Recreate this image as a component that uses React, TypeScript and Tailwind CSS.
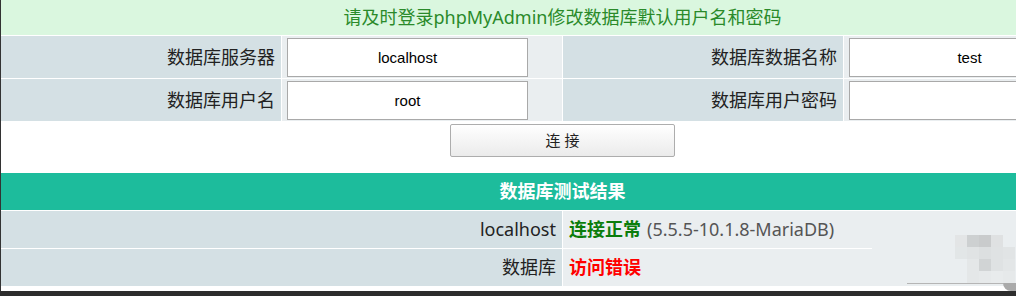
import React from "react";

const font = { fontFamily: '"Noto Sans", "Noto Sans CJK SC", sans-serif' };

function Label({ children }: { children: React.ReactNode }) {
  return (
    <div className="flex h-[42px] items-center justify-end bg-[#d4e0e4] pr-[6px] text-[18px] text-[#222]">
      {children}
    </div>
  );
}

function Field({ value }: { value: string }) {
  return (
    <div className="flex h-[42px] items-center bg-[#eaeef0] pl-[5px]">
      <input
        readOnly
        value={value}
        className="h-[39px] w-[241px] border border-[#a9a9a9] bg-white text-center text-[15px] text-black outline-none"
        style={{ fontFamily: '"Liberation Sans", Arial, sans-serif' }}
      />
    </div>
  );
}

export default function App() {
  return (
    <div className="relative h-[296px] w-[1016px] overflow-hidden bg-white" style={font}>
      <div className="flex h-[291px] w-[1016px] border-l border-[#333]">
        <div className="w-[1123px] shrink-0">
          {/* Top form */}
          <div className="grid grid-cols-[280px_280px_280px_280px] gap-px bg-white">
            <div className="col-span-4 flex h-[35px] items-center justify-center bg-[#daf7df] text-[18px] text-[#2a8a2a]">
              请及时登录phpMyAdmin修改数据库默认用户名和密码
            </div>
            <Label>数据库服务器</Label>
            <Field value="localhost" />
            <Label>数据库数据名称</Label>
            <Field value="test" />
            <Label>数据库用户名</Label>
            <Field value="root" />
            <Label>数据库用户密码</Label>
            <Field value="" />
          </div>

          {/* Connect button */}
          <div className="flex h-[52px] justify-center pt-[3px]">
            <button className="h-[33px] w-[225px] rounded-[2px] border border-[#adadad] bg-gradient-to-b from-white to-[#ebebeb] text-[15px] text-[#222]">
              连 接
            </button>
          </div>

          {/* Results */}
          <div className="grid grid-cols-[561px_561px] gap-px bg-white">
            <div className="col-span-2 flex h-[37px] items-center justify-center bg-[#1dbc9c] text-[18px] font-bold text-white">
              数据库测试结果
            </div>
            <div className="flex h-[37px] items-center justify-end bg-[#d4e0e4] pr-[6px] text-[18px] text-[#222]">
              localhost
            </div>
            <div className="flex h-[37px] items-center bg-[#eaeef0] pl-[6px] text-[18px]">
              <span className="font-bold text-[#0b7d0b]">连接正常</span>
              <span className="ml-[6px] text-[#555]">(5.5.5-10.1.8-MariaDB)</span>
            </div>
            <div className="flex h-[37px] items-center justify-end bg-[#d4e0e4] pr-[6px] text-[18px] text-[#222]">
              数据库
            </div>
            <div className="flex h-[37px] items-center bg-[#eaeef0] pl-[6px] text-[18px]">
              <span className="font-bold text-[#ff0000]">访问错误</span>
            </div>
          </div>
        </div>
      </div>
      <div className="h-[5px] w-full bg-[#2d2d2d]" />

      {/* blurred watermark overlay */}
      <div className="absolute left-[872px] top-[246px] h-[40px] w-[144px] bg-[#eaeef0]" />
      <div className="absolute left-[955px] top-[235px] grid grid-cols-[12px_12px_12px_12px_12px] grid-rows-[12px_12px_12px_12px]">
        <div className="bg-[#e3e5e6]" />
        <div className="bg-[#cdd0d1]" />
        <div className="bg-[#c9cbcc]" />
        <div className="bg-[#dfe1e2]" />
        <div className="bg-[#eaeef0]" />
        <div className="bg-[#e2e6e7]" />
        <div className="bg-[#e0e3e4]" />
        <div className="bg-[#dcdfe0]" />
        <div className="bg-[#dfe2e3]" />
        <div className="bg-[#e1e4e5]" />
        <div className="bg-[#eaeef0]" />
        <div className="bg-[#e4e7e8]" />
        <div className="bg-[#d1d4d5]" />
        <div className="bg-[#dfe2e3]" />
        <div className="bg-[#e3e6e7]" />
        <div className="bg-[#eaeef0]" />
        <div className="bg-[#e4e7e8]" />
        <div className="bg-[#e6e9ea]" />
        <div className="bg-[#e8ebec]" />
        <div className="bg-[#e6e9ea]" />
      </div>
      <div className="absolute left-[907px] top-[283px] h-px w-[96px] bg-[#b5b5b5]" />
      <div className="absolute left-[1003px] top-[283px] h-[8px] w-[13px] rounded-bl-[8px] bg-[#aaaaaa]" />
    </div>
  );
}
